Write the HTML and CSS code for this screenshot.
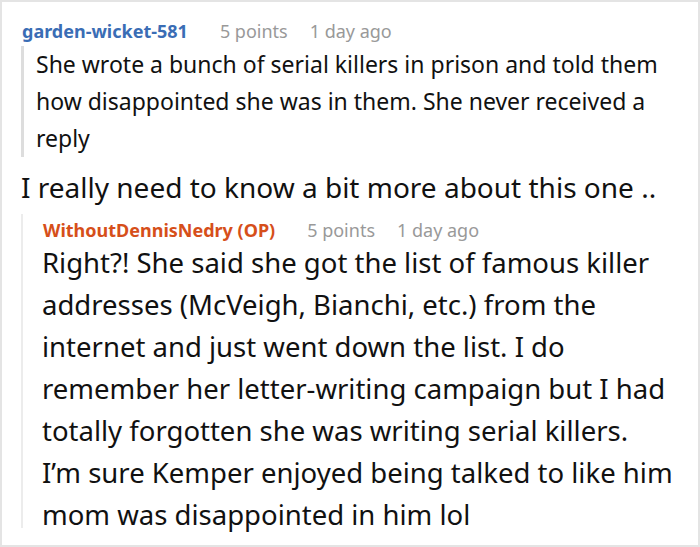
FILE: index.html
```html
<!DOCTYPE html>
<html>
<head>
<meta charset="utf-8">
<link rel="stylesheet" href="styles.css">
</head>
<body>
<div class="frame">
  <div class="comment">
    <div class="meta">
      <span class="author author-blue">garden-wicket-581</span>
      <span class="info">5 points</span>
      <span class="info">1 day ago</span>
    </div>
    <div class="quote">She wrote a bunch of serial killers in prison and told them how disappointed she was in them. She never received a reply</div>
  </div>
  <p class="reply-text">I really need to know a bit more about this one ..</p>
  <div class="thread">
    <div class="meta">
      <span class="author author-orange">WithoutDennisNedry (OP)</span>
      <span class="info">5 points</span>
      <span class="info">1 day ago</span>
    </div>
    <div class="big-text">Right?! She said she got the list of famous killer addresses (McVeigh, Bianchi, etc.) from the internet and just went down the list. I do remember her letter-writing campaign but I had totally forgotten she was writing serial killers.<br>I’m sure Kemper enjoyed being talked to like him mom was disappointed in him lol</div>
  </div>
</div>
</body>
</html>
```

FILE: styles.css
```css
html, body {
  margin: 0;
  padding: 0;
  background: #ffffff;
}
.frame {
  box-sizing: border-box;
  width: 700px;
  height: 547px;
  border: 2px solid #e4e4e4;
  overflow: hidden;
  font-family: "Noto Sans", "Open Sans", sans-serif;
  color: #111111;
  padding: 17px 0 0 20px;
}
.meta {
  display: flex;
  gap: 22px;
  font-size: 18px;
  line-height: 24px;
}
.author {
  font-weight: 700;
  margin-right: 10px;
}
.author-blue { color: #3a6db5; }
.author-orange { color: #d64f1a; }
.info { color: #999999; }
.quote {
  margin: 3px 0 0 -1px;
  border-left: 3px solid #dddddd;
  padding-left: 12px;
  font-size: 23px;
  line-height: 37px;
  width: 645px;
}
.reply-text {
  margin: 12px 0 0 -1px;
  font-size: 28px;
  line-height: 36px;
}
.thread {
  box-sizing: border-box;
  margin: 9px 0 0 -1px;
  border-left: 2px solid #ececec;
  padding: 4px 0 0 20px;
  height: 314px;
}
.big-text {
  margin-left: -1px;
  font-size: 27.5px;
  line-height: 42px;
  width: 641px;
}
```
